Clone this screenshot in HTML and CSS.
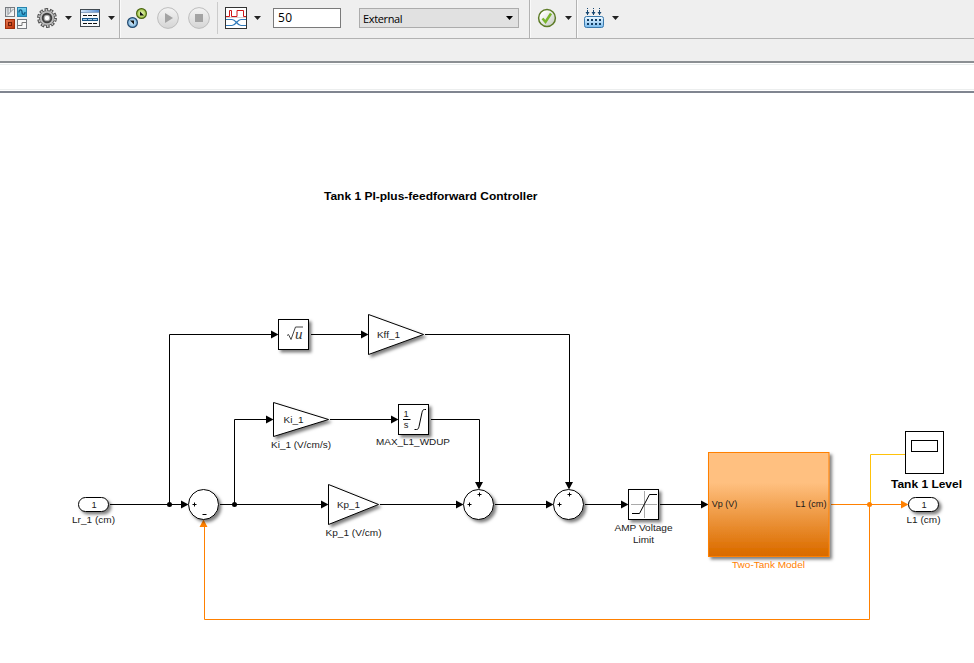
FILE: index.html
```html
<!DOCTYPE html>
<html lang="en">
<head>
<meta charset="utf-8">
<title>Tank 1 PI-plus-feedforward Controller</title>
<link rel="stylesheet" href="styles.css">
</head>
<body>
<header class="toolbar">
  <div class="group group-view">
    <svg class="library" width="22" height="22" viewBox="0 0 22 22">
      <defs>
        <linearGradient id="red" x2="1" y2="1"><stop offset="0" stop-color="#e87a55"/><stop offset="1" stop-color="#b92f05"/></linearGradient>
        <linearGradient id="cyan" x2="0" y2="1"><stop offset="0" stop-color="#82d6f2"/><stop offset="1" stop-color="#209bcb"/></linearGradient>
        <linearGradient id="silver" x2="1" y2="1"><stop offset="0" stop-color="#cfd2d6"/><stop offset="1" stop-color="#fff"/></linearGradient>
      </defs>
      <rect x=".5" y=".5" width="9" height="9" fill="url(#silver)" stroke="#777b80"/>
      <path d="M2 8.500L8.500 2M5.500 1v4M3 1v6" fill="none" stroke="#92979c"/>
      <rect x="12.500" y=".5" width="9" height="9" fill="url(#cyan)" stroke="#2782ad"/>
      <path d="M14 5.500C14 2 17 2 17 5s3 3.500 3 0" fill="none" stroke="#125a84" stroke-width="1.300"/>
      <rect x=".5" y="12.500" width="9" height="9" fill="url(#red)" stroke="#9e2e0a"/>
      <rect x="3.500" y="15.500" width="3" height="3" fill="#d95326" stroke="#70200a"/>
      <rect x="12.500" y="12.500" width="9" height="9" fill="#f8f8f8" stroke="#777b80"/>
      <path d="M13 18.500h4v-3h4" fill="none" stroke="#777"/>
    </svg>
    <svg class="gear" width="20" height="20" viewBox="-10 -10 20 20">
      <circle r="8.400" fill="none" stroke="#4c4c4c" stroke-width="3" stroke-dasharray="3.500 1.778"/>
      <circle r="7.500" fill="#bcbcbc" stroke="#555" stroke-width=".9"/>
      <circle r="8" fill="none" stroke="#c2c2c2" stroke-width="2" stroke-dasharray="1.600 3.427" stroke-dashoffset="-.9"/>
      <circle r="4.300" fill="#aaa" stroke="#404040" stroke-width="1.900"/>
      <circle r="2.200" fill="#fff"/>
    </svg>
    <svg class="caret" width="7" height="4"><path d="M0 0h7L3.500 4z"/></svg>
    <svg class="explorer" width="20" height="18" viewBox="0 0 20 18">
      <defs><linearGradient id="titlebar"><stop offset="0" stop-color="#d5e7fa"/><stop offset="1" stop-color="#548bd0"/></linearGradient></defs>
      <rect x=".5" y=".5" width="19" height="17" fill="#f7f9fb" stroke="#414950"/>
      <path d="M1 1h18v2H1z" fill="url(#titlebar)"/>
      <path d="M1 3.500h18" stroke="#8ba6c6"/>
      <path d="M3 6.500h4m1 0h4m1 0h4M3 14.500h4m1 0h4m1 0h4" stroke="#111"/>
      <rect x="2.500" y="9.500" width="15" height="2" fill="#a8cdec" stroke="#165689"/>
      <path d="M7.500 9v3m5-3v3" stroke="#165689"/>
    </svg>
    <svg class="caret" width="7" height="4"><path d="M0 0h7L3.500 4z"/></svg>
  </div>
  <div class="group group-run">
    <svg class="connect" width="21" height="21" viewBox="0 0 21 21">
      <defs>
        <radialGradient id="lime"><stop offset="0" stop-color="#f0f8c8"/><stop offset="1" stop-color="#9dc43c"/></radialGradient>
        <radialGradient id="sky"><stop offset="0" stop-color="#e3f4ff"/><stop offset="1" stop-color="#72add8"/></radialGradient>
      </defs>
      <circle cx="14.500" cy="5.500" r="4.900" fill="url(#lime)" stroke="#4b6514" stroke-width="1.200"/>
      <path d="M13 3.500v4h4z" fill="#111"/>
      <circle cx="5.500" cy="14.500" r="4.900" fill="url(#sky)" stroke="#254b70" stroke-width="1.200"/>
      <path d="M7 16.500v-4H3z" fill="#111"/>
    </svg>
    <svg class="run" width="22" height="22" viewBox="0 0 22 22">
      <defs><linearGradient id="button" x2="0" y2="1"><stop offset="0" stop-color="#f4f4f4"/><stop offset="1" stop-color="#d5d5d5"/></linearGradient></defs>
      <circle cx="11" cy="11" r="10.400" fill="url(#button)" stroke="#bdbdbd"/>
      <path d="M8 6v10l8-5z" fill="#a3a3a3"/>
    </svg>
    <svg class="stop" width="22" height="22" viewBox="0 0 22 22">
      <circle cx="11" cy="11" r="10.400" fill="url(#button)" stroke="#bdbdbd"/>
      <path d="M7 7h8v8H7z" fill="#a3a3a3"/>
    </svg>
    <span class="divider"></span>
    <svg class="inspector" width="22" height="22" viewBox="0 0 22 22">
      <rect x=".5" y=".5" width="21" height="21" fill="#fff" stroke="#333"/>
      <path d="M1 10.500h20" stroke="#d4d4d4"/>
      <path d="M1 9.500h3.500v-6h2v6H12v-6h6.500v6H21" fill="none" stroke="#cf1616"/>
      <path d="M1 12.500h6c4 0 5 6 9 6h5M1 18.500h6c4 0 5-6 9-6h5" fill="none" stroke="#327bbb" stroke-width="1.200"/>
    </svg>
    <svg class="caret" width="7" height="4"><path d="M0 0h7L3.500 4z"/></svg>
    <div class="stop-time">50</div>
    <div class="mode"><span>External</span><svg width="7" height="4"><path d="M0 0h7L3.500 4z"/></svg></div>
  </div>
  <div class="group group-check">
    <svg width="20" height="20" viewBox="0 0 20 20">
      <defs><linearGradient id="disc" x2="1" y2="1"><stop offset=".2" stop-color="#fff"/><stop offset="1" stop-color="#bfc5ba"/></linearGradient></defs>
      <circle cx="10" cy="10" r="8.400" fill="url(#disc)" stroke="#5d7b27" stroke-width="1.500"/>
      <path d="M5.500 10.500l3 3.500 5.500-8.500" fill="none" stroke="#79b52c" stroke-width="2.500"/>
    </svg>
    <svg class="caret" width="7" height="4"><path d="M0 0h7L3.500 4z"/></svg>
  </div>
  <div class="group group-build">
    <svg width="20" height="20" viewBox="0 0 20 20">
      <defs><linearGradient id="chip" x2="0" y2="1"><stop offset="0" stop-color="#f1faff"/><stop offset="1" stop-color="#76b9ed"/></linearGradient></defs>
      <path d="M3.500 0v1m0 1v5M9.500 0v1m0 1v5M15.500 0v1m0 1v5" stroke="#174872"/>
      <path d="M1.500 4h4l-2 3zM7.500 4h4l-2 3zM13.500 4h4l-2 3z" fill="#174872"/>
      <rect x=".5" y="8.500" width="19" height="11" rx="2" fill="url(#chip)" stroke="#3979ad"/>
      <path d="M3 12h2m2 0h2m2 0h2m2 0h2M3 16h2m2 0h2m2 0h2m2 0h2" stroke="#123c62" stroke-width="2"/>
    </svg>
    <svg class="caret" width="7" height="4"><path d="M0 0h7L3.500 4z"/></svg>
  </div>
</header>
<div class="tab-strip"></div>
<div class="path-bar"></div>
<main>
<svg class="model" width="974" height="570" viewBox="0 93 974 570">
  <defs>
    <filter id="shadow" x="-30%" y="-30%" width="170%" height="170%"><feDropShadow dx="2.500" dy="2.500" stdDeviation="1.500" flood-color="#000" flood-opacity=".5"/></filter>
    <linearGradient id="tank" x2="0" y2="1"><stop offset="0" stop-color="#ffc080"/><stop offset=".29" stop-color="#ffc080"/><stop offset=".95" stop-color="#dc6e00"/><stop offset="1" stop-color="#d96b00"/></linearGradient>
  </defs>

  <text class="title" x="324" y="200" textLength="213.500" lengthAdjust="spacingAndGlyphs">Tank 1 PI-plus-feedforward Controller</text>

  <g class="wire">
    <path d="M110 504.500h72M169.500 504.500v-170h103M311 334.500h51M425 334.500h144.500V483"/>
    <path d="M220 504.500h102M234.500 504.500v-85h33M330 419.500h62M431 419.500h48.500V483"/>
    <path d="M380 504.500h77M495 504.500h53M585 504.500h38M660 504.500h42"/>
  </g>
  <g class="heads">
    <path d="M188.500 504.500l-7.500-4v8zM278.500 334.500l-7.500-4v8zM368.500 334.500l-7.500-4v8zM273.500 419.500l-7.500-4v8zM398.500 419.500l-7.500-4v8zM328.500 504.500l-7.500-4v8zM463.500 504.500l-7.500-4v8zM553.500 504.500l-7.500-4v8zM628.500 504.500l-7.500-4v8zM708.500 504.500l-7.500-4v8z"/>
    <path d="M479 489.500l-4-7.500h8zM569 489.500l-4-7.500h8z"/>
    <circle cx="169.500" cy="504.500" r="2.500"/><circle cx="234.500" cy="504.500" r="2.500"/>
  </g>
  <path class="feedback-wire" d="M831 504.500h71M869.500 504.500v115H204.500V527"/>
  <path class="scope-wire" d="M870.500 503v-48.500H905"/>
  <g class="feedback-heads">
    <path d="M908.500 504.500l-7.500-4v8zM203.500 519.500l-4 7.500h8z"/>
    <circle cx="869.500" cy="504.500" r="2.500"/>
  </g>

  <g class="block">
    <rect x="78.500" y="497.500" width="30" height="14" rx="7"/>
    <circle cx="203.500" cy="504.500" r="15"/>
    <rect x="278.500" y="319.500" width="30" height="30"/>
    <path d="M368.500 314.500v40l55-20z"/>
    <path d="M273.500 402.500v34l55-17z"/>
    <rect x="398.500" y="404.500" width="30" height="30"/>
    <path d="M328.500 484.500v40l50-20z"/>
    <circle cx="478.500" cy="504.500" r="15"/>
    <circle cx="568.500" cy="504.500" r="15"/>
    <rect x="628.500" y="489.500" width="30" height="30"/>
    <rect x="908.500" y="497.500" width="30" height="14" rx="7"/>
  </g>
  <rect class="tank" x="708.500" y="452.500" width="120.500" height="104"/>
  <rect class="scope" x="905.500" y="431.500" width="38" height="42"/>
  <rect class="scope" x="911.500" y="440.500" width="26" height="11"/>

  <g class="glyph">
    <path class="radical" d="M287 335.500l1.500-1 2.500 5 4.500-12.500h7.500"/>
    <path d="M403 419.500h7.500M414.500 429.500h2c1.500 0 2-1 2.500-3l3-14c.5-2 1-3 2.500-3h1.500"/>
    <path d="M192.500 504.500h4m-2-2v4M202.500 514.500h4M467.500 504.500h4m-2-2v4M477.500 494.500h4m-2-2v4M557.500 504.500h4m-2-2v4M567.500 494.500h4m-2-2v4"/>
    <path class="axes" d="M631 504.500h26M644.500 491v27"/>
    <path d="M632 513.500h7.500l10-19h7.500"/>
  </g>
  <text class="radicand" x="295" y="339">u</text>

  <g class="label">
    <text x="94" y="508">1</text>
    <text x="93.500" y="523" textLength="43" lengthAdjust="spacingAndGlyphs">Lr_1 (cm)</text>
    <text x="388.500" y="338" textLength="23" lengthAdjust="spacingAndGlyphs">Kff_1</text>
    <text x="293.500" y="423" textLength="20" lengthAdjust="spacingAndGlyphs">Ki_1</text>
    <text x="301" y="448" textLength="60" lengthAdjust="spacingAndGlyphs">Ki_1 (V/cm/s)</text>
    <text x="406" y="417">1</text>
    <text x="406" y="428">s</text>
    <text x="413" y="445" textLength="74" lengthAdjust="spacingAndGlyphs">MAX_L1_WDUP</text>
    <text x="348.500" y="508" textLength="23" lengthAdjust="spacingAndGlyphs">Kp_1</text>
    <text x="353.500" y="536" textLength="56" lengthAdjust="spacingAndGlyphs">Kp_1 (V/cm)</text>
    <text x="643.500" y="531" textLength="58" lengthAdjust="spacingAndGlyphs">AMP Voltage</text>
    <text x="643.500" y="543" textLength="21" lengthAdjust="spacingAndGlyphs">Limit</text>
    <text x="724.500" y="507" textLength="25.500" lengthAdjust="spacingAndGlyphs">Vp (V)</text>
    <text x="811" y="507" textLength="31" lengthAdjust="spacingAndGlyphs">L1 (cm)</text>
    <text class="tank-name" x="768.500" y="568" textLength="73" lengthAdjust="spacingAndGlyphs">Two-Tank Model</text>
    <text x="924" y="508">1</text>
    <text x="923.500" y="523" textLength="34" lengthAdjust="spacingAndGlyphs">L1 (cm)</text>
  </g>
  <text class="title" x="891" y="488" textLength="71" lengthAdjust="spacingAndGlyphs">Tank 1 Level</text>
</svg>
</main>
</body>
</html>
```
FILE: styles.css
```css
* { box-sizing: border-box; }
body {
  margin: 0;
  width: 974px;
  height: 663px;
  overflow: hidden;
  background: #fff;
  font-family: "Liberation Sans", Arial, sans-serif;
}
svg { display: block; flex: none; }

.toolbar {
  display: flex;
  height: 39px;
  background: #efefef;
  border-bottom: 1px solid #b2b2b2;
}
.group {
  display: flex;
  align-items: center;
  height: 38px;
  padding-bottom: 2px;
}
.group + .group {
  border-left: 1px solid #b2b2b2;
  box-shadow: inset 1px 0 #fafafa;
}
.caret { fill: #222; }
.group-view { width: 119px; padding-left: 5px; }
.gear { margin: 0 8px 0 10px; }
.explorer { margin: 0 8px; }
.group-run { width: 410px; padding-left: 7px; }
.run { margin-left: 9px; }
.stop { margin-left: 9px; }
.divider { width: 1px; height: 32px; margin: 0 7px; background: #cbcbcb; }
.inspector { margin-right: 7px; }
.stop-time {
  width: 68px;
  height: 20px;
  margin-left: 12px;
  padding-left: 4px;
  border: 1px solid #7a7a7a;
  background: #fff;
  font: 12px/18px "Open Sans", "Noto Sans", sans-serif;
  letter-spacing: .3px;
}
.mode {
  display: flex;
  align-items: center;
  justify-content: space-between;
  width: 160px;
  height: 20px;
  margin-left: 18px;
  padding: 0 5px 0 3px;
  border: 1px solid #acacac;
  background: #e1e1e1;
  font: 11px/20px "Open Sans", "Noto Sans", sans-serif;
  letter-spacing: -.35px;
}
.mode span { padding-top: 2px; }
.group-check { width: 47px; padding-left: 7px; }
.group-check .caret { margin-left: 8px; }
.group-build { flex: 1; padding-left: 7px; }
.group-build .caret { margin-left: 8px; }

.tab-strip {
  height: 24px;
  background: #efefef;
  border-bottom: 2px solid #8b8f93;
}
.path-bar {
  height: 30px;
  background: #fff;
  border-bottom: 2px solid #808590;
  box-shadow: inset 0 1px #fff, inset 0 2px #e9eded, inset 0 -1px #fff, inset 0 -2px #eceeee;
}

.model { font-family: "Liberation Sans", Arial, sans-serif; }
.title { font-size: 11.200px; font-weight: bold; }
.wire, .feedback-wire, .scope-wire, .glyph { fill: none; stroke: #000; stroke-width: 1px; }
.feedback-wire { stroke: #ff8000; }
.scope-wire { stroke: #ffc20a; }
.feedback-heads { fill: #ff8000; }
.block { fill: #fff; stroke: #000; }
.block > * { filter: url(#shadow); }
.tank { fill: url(#tank); stroke: #ff8000; filter: url(#shadow); }
.scope { fill: #fff; stroke: #000; }
.axes { stroke: #aaa; }
.radical { stroke: #444; }
.label { font-size: 9.400px; text-anchor: middle; fill: #1a1a1a; }
.label .tank-name { fill: #ff8000; }
.radicand { font: italic 15px "Liberation Serif", serif; fill: #333; }
```
